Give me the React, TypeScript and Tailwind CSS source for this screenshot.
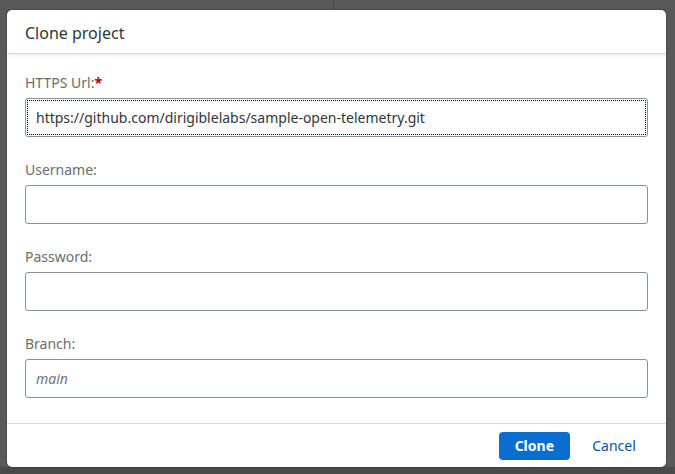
import { useState } from 'react'

const font = { fontFamily: '"Noto Sans", "Liberation Sans", Arial, sans-serif' }

function Field({ label, required, value, placeholder, focused }: {
  label: string
  required?: boolean
  value?: string
  placeholder?: string
  focused?: boolean
}) {
  const [v, setV] = useState(value ?? '')
  return (
    <div className="flex flex-col">
      <label className="text-[14px] leading-[18px] text-[#6a6d70] mb-[6px]">
        {label}
        {required && <span className="text-[#bb0000] font-bold">*</span>}
      </label>
      <div className={`h-[39px] rounded-[3px] border ${focused ? 'border-[#89919a] outline outline-1 outline-dotted outline-black -outline-offset-[3px]' : 'border-[#89919a]'} bg-white flex items-center`}>
        <input
          value={v}
          onChange={e => setV(e.target.value)}
          placeholder={placeholder}
          className="w-full h-full bg-transparent px-[10px] text-[14px] text-[#32363a] placeholder:italic placeholder:text-[#74777a] outline-none"
          style={font}
        />
      </div>
    </div>
  )
}

export default function App() {
  return (
    <div className="relative w-[675px] h-[474px] bg-[#595959] overflow-hidden" style={font}>
      <div className="absolute left-[333px] top-0 h-[10px] w-px bg-[#474747]" />
      <div className="absolute left-0 right-0 bottom-0 h-[7px] bg-[#4a4a4a]" />
      <div className="absolute left-[7px] top-[10px] w-[659px] h-[457px] bg-white rounded-[5px] flex flex-col overflow-hidden shadow-[0_0_2px_rgba(0,0,0,.5)]">
        {/* Header */}
        <div className="h-[44px] shrink-0 flex items-center px-[18px] border-b border-[#d9d9d9] shadow-[0_2px_3px_rgba(0,0,0,.06)]">
          <h1 className="text-[16px] text-[#32363a] pt-[2px]">Clone project</h1>
        </div>

        {/* Body */}
        <div className="flex-1 px-[18px] pt-[20px] flex flex-col gap-[24px]">
          <Field label="HTTPS Url:" required value="https://github.com/dirigiblelabs/sample-open-telemetry.git" focused />
          <Field label="Username:" />
          <Field label="Password:" />
          <Field label="Branch:" placeholder="main" />
        </div>

        {/* Footer */}
        <div className="h-[44px] shrink-0 border-t border-[#d9d9d9] flex items-center justify-end gap-[8px] pr-[16px]">
          <button className="h-[28px] px-[16px] rounded-[4px] bg-[#0a6ed1] text-white text-[14px] font-bold">Clone</button>
          <button className="h-[28px] w-[72px] rounded-[4px] text-[#0854a0] text-[14px]">Cancel</button>
        </div>
      </div>
    </div>
  )
}
